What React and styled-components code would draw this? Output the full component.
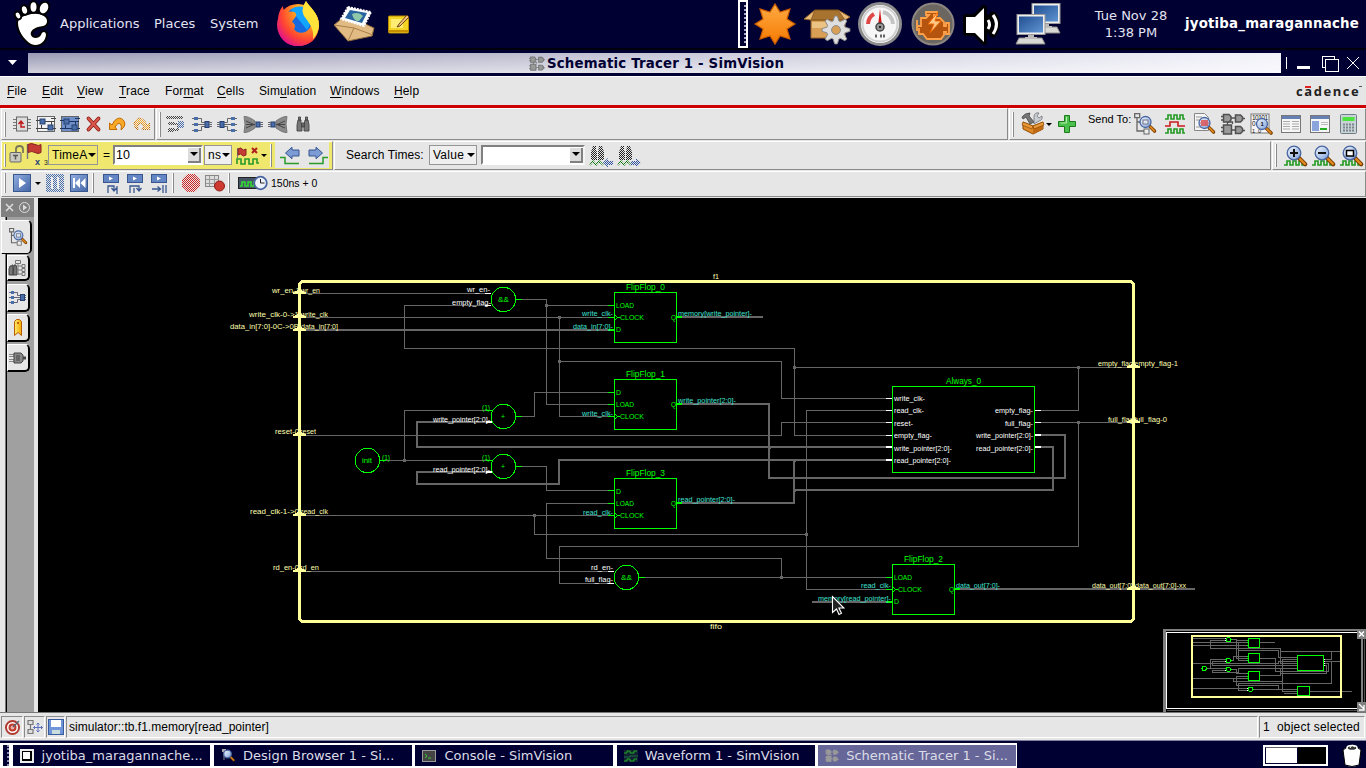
import React from "react";
import styled, { createGlobalStyle } from "styled-components";

const NAVY = "#000033";
const GREY = "#e6e6e6";
const BLUE = "#4a6ea9";
const UI = '"Liberation Sans", Arial, sans-serif';
const DESK = '"DejaVu Sans", sans-serif';

const Global = createGlobalStyle`
  * { box-sizing: border-box; }
  body { margin: 0; background: #000; overflow: hidden; }
`;

/* ---------- layout parts ---------- */
const Screen = styled.div`
  width: 1366px; height: 768px; display: flex; flex-direction: column;
  font-family: ${UI}; font-size: 12px; color: #000; overflow: hidden; cursor: default; white-space: nowrap;
`;
const Draw = styled.svg`
  display: block; flex: none; margin-left: ${(p) => p.$l || 0}px; margin-top: ${(p) => p.$t || 0}px; overflow: visible;
`;
const TopPanel = styled.header`
  height: 50px; flex: none; background: ${NAVY}; border-bottom: 2px solid #00000c; display: flex; align-items: center;
  font-family: ${DESK}; font-size: 13px; color: #e4e4f0;
`;
const PanelItem = styled.span`
  margin-left: ${(p) => p.$l || 0}px; width: ${(p) => p.$w}px; line-height: 16px; margin-top: -1px;
`;
const PanelGrip = styled.div`
  width: 10px; height: 48px; margin-left: 328px; border: 2px solid #fff; display: flex; justify-content: flex-end; padding: 3px 0;
  &::after { content: ""; border-right: 2px dotted #a8a8c8; }
`;
const Clock = styled.div`
  width: 80px; margin-left: 29px; text-align: center; line-height: 17px; margin-top: -1px;
`;
const User = styled.div`
  font-weight: bold; font-size: 13.33px; color: #fff; margin-left: 14px; width: 177px; margin-top: -1px; letter-spacing: .2px;
`;
const TitleBar = styled.div`
  height: 26px; flex: none; background: ${NAVY}; display: flex; align-items: center;
`;
const TitleFill = styled.div`
  width: 1253px; height: 20px; margin-left: 10px; display: flex; align-items: center;
  background: linear-gradient(180deg, rgba(255,255,255,0) 0%, rgba(255,255,255,.55) 100%), linear-gradient(90deg, #9999b4, #f2f2fa);
`;
const TitleText = styled.span`
  font: bold 13.33px ${DESK}; letter-spacing: .18px; color: ${NAVY}; margin-left: 2px; margin-top: 0;
`;
const MenuBar = styled.nav`
  height: 32px; flex: none; background: ${GREY}; border-top: 1px solid #fff; border-bottom: 3px solid #cc0000;
  display: flex; align-items: center; padding-left: 7px; padding-right: 6px;
`;
const MenuItem = styled.span`
  width: ${(p) => p.$w}px; letter-spacing: .12px; font-size: 12px;
  u { text-decoration: underline; text-underline-offset: 2px; }
`;
const Logo = styled.span`
  margin-left: auto; font: 700 13px "Open Sans", sans-serif; letter-spacing: 1.55px; color: #222; position: relative; width: 64px;
  i { position: absolute; left: 9px; top: 4px; width: 6px; height: 2px; background: #d22; }
  b { position: absolute; right: -2px; top: 4px; width: 3px; height: 1px; background: #555; }
`;
const ToolRow = styled.div`
  height: ${(p) => p.$h}px; flex: none; background: ${GREY}; display: flex; padding-left: 1px;
`;
const Group = styled.section`
  width: ${(p) => p.$w}px; background: ${(p) => p.$bg || GREY}; display: flex; align-items: center; flex: none;
  border: 1px solid; border-color: #fff #8a8a8a #8a8a8a #fff; margin-bottom: 1px; margin-right: 1px; padding: 0 0 ${(p) => p.$pb || 0}px 2px;
`;
const Grip = styled.i`
  width: 2px; height: ${(p) => p.$h || 25}px; margin-left: ${(p) => p.$l || 0}px; background: linear-gradient(90deg, #fff 50%, #8a8a8a 50%); flex: none;
`;
const Label = styled.span`
  margin-left: ${(p) => p.$l || 0}px; width: ${(p) => p.$w}px; letter-spacing: ${(p) => p.$s || 0}px; margin-top: ${(p) => p.$t || 0}px;
  font-size: ${(p) => p.$f || 12}px; flex: none;
`;
const Choice = styled.div`
  width: ${(p) => p.$w}px; height: 20px; margin-left: ${(p) => p.$l || 0}px; border: 1px solid #959595; background: ${(p) => p.$bg || "#efefef"};
  display: flex; align-items: center; justify-content: space-between; padding: 0 1px 0 3px; font-size: 12px; letter-spacing: .25px; flex: none;
`;
const Combo = styled.div`
  width: ${(p) => p.$w}px; height: 20px; margin-left: ${(p) => p.$l || 0}px; background: #fff; border: 2px solid; border-color: #808080 #f4f4f4 #fff #808080;
  display: flex; align-items: center; justify-content: space-between; padding-left: 1px; font-size: 12.5px; flex: none;
`;
const DropButton = styled.div`
  width: 13px; height: 15px; background: #dcdcdc; border-right: 2px solid #808080; border-bottom: 2px solid #808080; display: flex; align-items: center; justify-content: center;
`;
const Caret = styled.i`
  width: 0; height: 0; border: 4px solid transparent; border-top: 4px solid #000; border-bottom: 0; margin-left: ${(p) => p.$l || 0}px; flex: none;
  ${(p) => p.$small && "border-left-width:3px;border-right-width:3px;border-top-width:3px;"}
`;
const ArrowBox = styled.div`
  width: 54px; height: 26px; background: ${GREY}; margin-left: 3px; display: flex; align-items: center; flex: none;
`;
const BlueButton = styled.div`
  width: 18px; height: 18px; margin-left: ${(p) => p.$l || 0}px; flex: none; border: 1px solid #38578f; background: linear-gradient(135deg, #90ace0, #4568a8);
`;
const Main = styled.main`
  flex: 1; display: flex; position: relative; background: #000; min-height: 0;
`;
const Side = styled.aside`
  width: 38px; flex: none; background: #a0a0a0; border-right: 4px solid ${GREY}; border-left: 1px solid ${GREY}; display: flex; flex-direction: column;
`;
const SideHead = styled.div`
  height: 19px; background: #808080; display: flex; align-items: center; flex: none;
`;
const SideTabs = styled.div`
  flex: 1; display: flex; flex-direction: column; padding-top: 3px;
  background: linear-gradient(90deg, ${GREY} 4px, #777 4px, #777 5px, #000 5px, #000 6px, transparent 6px);
`;
const Tab = styled.div`
  width: ${(p) => (p.$on ? 31 : 23)}px; height: ${(p) => p.$h}px; margin-left: ${(p) => (p.$on ? 0 : 6)}px; margin-bottom: ${(p) => p.$b}px;
  background: ${GREY}; border: 1px solid; border-color: #fff #000 #000 #fff; border-width: 1px 2px ${(p) => (p.$on ? 1 : 2)}px 1px;
  border-radius: 0 5px 5px 0; display: flex; align-items: center; padding-left: ${(p) => (p.$on ? 7 : 1)}px; flex: none;
`;
const Canvas = styled.div` flex: 1; overflow: hidden; `;
const MiniMap = styled.div`
  position: absolute; right: 0; bottom: 0; width: 203px; height: 83px; background: #000; border-left: 3px solid #808080; border-top: 2px solid #808080;
`;
const StatusBar = styled.footer`
  height: 29px; flex: none; background: ${GREY}; border-top: 1px solid #777; border-bottom: 1px solid #8080a0; padding: 3px 1px 2px; display: flex;
`;
const StatusCell = styled.div`
  width: ${(p) => p.$w}px; ${(p) => p.$grow && "flex:1;"} border: 1px solid; border-color: #8a8a8a #fff #fff #8a8a8a; display: flex; align-items: center;
  padding-left: ${(p) => p.$p || 2}px; margin-right: ${(p) => (p.$last ? 0 : 1)}px; font-size: 12px; letter-spacing: ${(p) => p.$s || 0}px; white-space: pre;
`;
const TaskBar = styled.footer`
  height: 27px; flex: none; background: ${NAVY}; display: flex; align-items: center; font: 13px ${DESK}; color: #dcdce6;
`;
const TaskList = styled.div`
  background: #fff; height: 25px; margin-top: 2px; display: flex; gap: 3.6px; padding: 2px 1px 2px 3px; width: 1017px;
`;
const TaskGrip = styled.div`
  width: 6px; background: ${NAVY}; border-right: 2px dotted #8888a8; 
`;
const Task = styled.div`
  width: 198px; background: ${(p) => (p.$on ? "#666699" : NAVY)}; display: flex; align-items: center; padding-left: 7px; gap: ${(p) => p.$g || 9}px; overflow: hidden;
  span { margin-top: -1px; }
`;
const Pager = styled.div`
  width: 65px; height: 21px; margin-left: 246px; margin-top: 1px; border: 2px solid #fff; background: #000; display: flex;
  &::before { content: ""; width: 31px; background: #fff; border: 1px solid ${NAVY}; border-top-color: #666; }
`;

/* ---------- icons ---------- */
const DefsBox = styled.svg` position: absolute; `;
const Defs = () => (
  <DefsBox width="0" height="0">
    <defs>
      <pattern id="check" width="2" height="2" patternUnits="userSpaceOnUse">
        <rect width="1" height="1" fill="#fff" /><rect x="1" y="1" width="1" height="1" fill="#fff" />
      </pattern>
      <mask id="dither" maskUnits="userSpaceOnUse" x="-2" y="-2" width="40" height="40"><rect x="-2" y="-2" width="40" height="40" fill="url(#check)" /></mask>
      <linearGradient id="orange" x2="0" y2="1"><stop stopColor="#ffab44" /><stop offset="1" stopColor="#f57900" /></linearGradient>
      <linearGradient id="blueg" x2="1" y2="1"><stop stopColor="#234f92" /><stop offset="1" stopColor="#5f94d2" /></linearGradient>
      <radialGradient id="ffx" cx=".75" cy=".2" r=".9"><stop stopColor="#fff04a" /><stop offset=".4" stopColor="#ff9a1f" /><stop offset=".75" stopColor="#ff4433" /><stop offset="1" stopColor="#e31587" /></radialGradient>
      <linearGradient id="lens" x2="1" y2="1"><stop stopColor="#f4f8ff" /><stop offset="1" stopColor="#7fa2da" /></linearGradient>
      <linearGradient id="goldg" x2="1" y2="0"><stop stopColor="#ffea70" /><stop offset="1" stopColor="#f4a800" /></linearGradient>
    </defs>
  </DefsBox>
);
const Ico = ({ w, h, l, t, children }) => <Draw width={w} height={h} viewBox={`0 0 ${w} ${h}`} $l={l} $t={t}>{children}</Draw>;
const Lens = ({ x, y, r, fill = "url(#lens)" }) => (
  <g>
    <path d={`M${x + r * 0.7} ${y + r * 0.7} l${r * 0.95} ${r * 0.95}`} stroke="#7a3c00" strokeWidth={r * 0.62} strokeLinecap="round" />
    <path d={`M${x + r * 0.9} ${y + r * 0.9} l${r * 0.7} ${r * 0.7}`} stroke="#e08a1c" strokeWidth={r * 0.32} strokeLinecap="round" />
    <circle cx={x} cy={y} r={r} fill={fill} stroke="#4a66a0" strokeWidth="1.3" />
  </g>
);
const Foot = () => (
  <Ico w={36} h={46} l={14} t={0}>
    <g fill="#fff" stroke="#000" strokeWidth="4" paintOrder="stroke">
      <path d="M14 14C22 11 34 14 33 21C32 26 27 25 24 26C18 28 16 31 17 34C18 38 25 38 27 34C28 30 32 30 32 34C31 42 24 46 17 43C9 38 4 29 4 22C4 17 9 15 14 14Z" />
      <ellipse cx="30" cy="7" rx="4" ry="5.5" transform="rotate(25 30 7)" /><ellipse cx="19.5" cy="6" rx="3" ry="4.8" /><ellipse cx="10.5" cy="9" rx="2.5" ry="3.8" transform="rotate(-15 10.5 9)" /><ellipse cx="4" cy="14.5" rx="2" ry="3.1" transform="rotate(-25 4 14.5)" />
    </g>
  </Ico>
);
const Firefox = () => (
  <Ico w={44} h={46} l={18} t={-1}>
    <circle cx="22" cy="24" r="21" fill="url(#ffx)" />
    <circle cx="23" cy="20" r="14" fill="#1769e0" /><path d="M15 9C20 4 29 5 32 9C36 15 35 24 31 29L24 20Z" fill="#12a5ff" />
    <path d="M2 20C2 12 5 7 7 5C7 8 8 9 9 11C14 10 20 10 20 13C21 16 17 18 16 21C19 23 20 25 18 28C20 32 28 34 33 28C38 22 33 16 27 12C26 7 28 3 30 0C33 6 43 12 43 25C42 39 33 45 22 45C9 45 1 36 2 20Z" fill="url(#ffx)" />
    <path d="M30 0C34 7 43 12 43 25C42 31 40 35 37 38C38 29 35 24 28 15C25 9 28 4 30 0Z" fill="#ffe33a" />
  </Ico>
);
const Mail = () => (
  <Ico w={42} h={36} l={13}>
    <path d="M1 19L13 9L41 22L39 30L15 35Z" fill="#e2ba84" stroke="#8f6b3a" /><path d="M1 19L21 22L15 35M21 22L40 29" fill="none" stroke="#aa8048" />
    <path d="M15 1L38 6L31 20L8 13Z" fill="#fff" stroke="#fff" strokeWidth="2" strokeDasharray="2 1" /><path d="M17 4L34 7L29 17L12 12Z" fill="#28649f" /><path d="M19 8Q26 5 30 10L26 15Q21 16 19 8Z" fill="#8ec8a8" />
  </Ico>
);
const Note = () => (
  <Ico w={22} h={20} l={13} t={-1}>
    <rect x=".5" y="2" width="20" height="17" rx="1" fill="#f3d425" stroke="#b98a00" /><path d="M1 17h19" stroke="#c58f00" strokeWidth="2" /><path d="M3 5h12v9h-12z" fill="#ffed73" />
    <path d="M19 1L11 10L9 13L12 12L21 3Z" fill="#f6c07a" stroke="#5b3a10" strokeWidth=".9" />
  </Ico>
);
const Star = () => (
  <Ico w={42} h={42} l={6} t={-1}>
    <path d="M21 1L26 9L36 6L33 16L41 21L33 26L36 36L26 33L21 41L16 33L6 36L9 26L1 21L9 16L6 6L16 9Z" fill="url(#orange)" stroke="#c85a00" strokeWidth="1.2" />
  </Ico>
);
const gearPath = (cx, cy, r1, r2, n) => {
  let d = "";
  for (let i = 0; i < n * 4; i++) {
    const a = ((i - 0.5) / (n * 4)) * Math.PI * 2;
    const r = i % 4 < 2 ? r2 : r1;
    d += `${i ? "L" : "M"}${(cx + r * Math.cos(a)).toFixed(1)} ${(cy + r * Math.sin(a)).toFixed(1)}`;
  }
  return d + "Z";
};
const Package = () => (
  <Ico w={48} h={38} l={7} t={2}>
    <path d="M8 14H42V32H8Z" fill="#d9a055" stroke="#9a682a" /><path d="M12 4H35L42 14H8Z" fill="#a8732e" stroke="#7f5217" /><path d="M12 4L1 13L8 14Z" fill="#e9bb78" stroke="#9a682a" /><path d="M35 4L47 11L42 14Z" fill="#e9bb78" stroke="#9a682a" /><path d="M9 16h22v6h-22z" fill="#eac384" />
    <path d={gearPath(33, 24, 9.5, 14, 8)} fill="#dedede" stroke="#8a8a8a" /><circle cx="33" cy="24" r="4.4" fill="#d9a055" stroke="#8a8a8a" />
  </Ico>
);
const Gauge = () => (
  <Ico w={44} h={44} l={7} t={0}>
    <circle cx="22" cy="22" r="20.5" fill="#fbfbfb" stroke="#8c8c8c" strokeWidth="3" /><circle cx="22" cy="22" r="17.5" fill="#f6f6f6" stroke="#cfcfcf" strokeWidth="2" />
    <path d="M10 22A12 12 0 0 1 16 12" fill="none" stroke="#e04848" strokeWidth="4" /><path d="M25 10A13 13 0 0 1 35 22" fill="none" stroke="#c4c4c4" strokeWidth="4" />
    <path d="M20 24L22 7L24 24Z" fill="#d01818" /><circle cx="22" cy="25" r="4" fill="#999" stroke="#444" strokeWidth="1.5" /><circle cx="22" cy="25" r="1.2" fill="#222" /><path d="M17 34h3M22 34h6" stroke="#666" strokeWidth="3" strokeDasharray="2 1" />
  </Ico>
);
const Engine = () => (
  <Ico w={44} h={44} l={9} t={0}>
    <circle cx="22" cy="22" r="20.5" fill="#6c6660" stroke="#8c8580" strokeWidth="2" />
    <path d="M6 18v11M6 24h4v-8h5l3-3h-3v-3h11v3h-3v3h6l4 4v4h2v-3h3v11h-3v-2h-2v3l-3 4h-14l-4-5h-4v-6" fill="#b4540f" stroke="#ffa24a" strokeWidth="1.8" /><path d="M27 10L17 22h6l-4 9L30 19h-6Z" fill="#ffc98a" stroke="#f26a00" />
  </Ico>
);
const Speaker = () => (
  <Ico w={40} h={44} l={7} t={0}>
    <path d="M4 15H13L22 6V40L13 31H4Z" fill="#fff" stroke="#000" strokeWidth="6" strokeLinejoin="round" paintOrder="stroke" /><path d="M27 16Q31 22 27 28M31 13Q38 22 31 32" fill="none" stroke="#000" strokeWidth="7" strokeLinecap="round" /><path d="M26 18Q29 22.5 26 27M31 13Q38 22 31 32" fill="none" stroke="#fff" strokeWidth="3" />
  </Ico>
);
const Computers = () => (
  <Ico w={46} h={42} l={14} t={-1}>
    {[[15, 0], [0, 11]].map(([x, y]) => (
      <g key={x} transform={`translate(${x} ${y})`}>
        <path d="M3 24H26L29 30H0Z" fill="#d8d8d4" stroke="#8b8b88" /><path d="M12 20h6v3h3v2h-12v-2h3z" fill="#bbb" /><rect x="1" y=".5" width="28" height="20" fill="#eee" stroke="#999" /><rect x="3" y="2.5" width="24" height="16" fill="url(#blueg)" />
      </g>
    ))}
  </Ico>
);
const Gates = ({ w = 24, h = 22, l, t, c = "#505050" }) => (
  <Draw width={w} height={h} viewBox="0 0 24 22" preserveAspectRatio="none" $l={l} $t={t}>
    <path d="M0 3.5h3M0 7h3M9 5h6M21 5.5h3M0 14.5h3M0 18.5h3M11.5 11v-2h-5v3M10 17h5M21 17.5h3" fill="none" stroke={c} strokeWidth="1.3" />
    <path d="M2.5 1.5h5.5l2 2v3.5l-2 2h-5.5zM14.5 2h5l2 2v3l-2 2h-5zM2.5 12h8v9h-8zM14.5 13.5h5l2 2v3l-2 2h-5z" fill="#999" stroke={c} strokeWidth="1.5" />
  </Draw>
);
const Chip = () => (
  <Ico w={18} h={16} l={7}>
    <path d="M0 3.5h18M0 6.5h18M0 9.5h18M0 12.5h18" stroke="#777" /><rect x="3.5" y="1" width="11" height="14" fill="#dcdcdc" stroke="#666" /><path d="M12 11H8V6M5.5 8L8 5.2L10.5 8" fill="none" stroke="#c21a1a" strokeWidth="1.5" />
  </Ico>
);
const Nets = ({ l, fill }) => (
  <Ico w={20} h={18} l={l}>
    <rect x="1.5" y="1.5" width="17" height="15" fill={fill || "#f2f2f2"} stroke="#666" /><path d="M0 5.5h4M0 13.5h12M9 6.5h10M15.5 6v4M5.5 10v3.5M15 3.5h5M17 13.5h3" stroke={fill ? "#1d3362" : "#444"} fill="none" />
    <rect x="4" y="4" width="5" height="5" fill={BLUE} stroke="#27406f" /><rect x="12" y="10" width="5" height="5" fill={BLUE} stroke="#27406f" />
  </Ico>
);
const Cross = () => (<Ico w={15} h={16} l={6}><path d="M2.5 2.5L12.5 13.5M12.5 2.5L2.5 13.5" stroke="#8f1d15" strokeWidth="3.8" strokeLinecap="round" /><path d="M2.5 2.5L12.5 13.5M12.5 2.5L2.5 13.5" stroke="#d8564a" strokeWidth="2.2" strokeLinecap="round" /></Ico>);
const Undo = ({ l, flip, fade }) => (
  <Ico w={17} h={14} l={l}><g mask={fade ? "url(#dither)" : undefined}><path transform={flip ? "translate(17 0) scale(-1 1)" : undefined} d="M.5 6L.5 12.5H8L6 10Q9 5 11.5 7Q13 9 12 13Q17 9 15.5 5Q13 0 8.5 1.5Q5 3 3 8Z" fill="#f9a928" stroke="#c06a00" /></g></Ico>
);
const Fan = ({ l, flip, dark }) => (
  <Ico w={20} h={17} l={l}>
    <g transform={flip ? "translate(20 0) scale(-1 1)" : undefined}>
      {dark ? (<>
        <path d="M1 .5Q5 0 12 5V12Q5 17 1 16.5Q3 8 1 .5Z" fill="#8a8a8a" stroke="#777" /><path d="M3 5l8 3.5M3 12l8-3.5M3 8.5h9" stroke="#444" /><rect x="13" y="6" width="4" height="5" fill={BLUE} stroke="#27406f" />
      </>) : (<>
        <path d="M0 2.5h9.5v4h4M0 8.5h13M0 14.5h9.5v-4h4" fill="none" stroke="#666" /><path d="M2 1h4v3h-4zM2 7h4v3h-4zM2 13h4v3h-4z" fill={BLUE} /><rect x="13" y="5.5" width="4" height="6" fill={BLUE} stroke="#27406f" />
      </>)}
      <path d="M17 6.5h3M17 8.5h3M17 10.5h3" stroke="#667" />
    </g>
  </Ico>
);
const DitherNet = () => (<Ico w={20} h={18} l={5}><g mask="url(#dither)"><path d="M0 1h17v3h-17zM2 7h6v3h-6zM2 13h6v4h-6zM8 8h5v2h-5zM8 14h3v-4h2v6h-5z" fill="#444" /><rect x="12" y="6" width="6" height="7" fill={BLUE} /></g></Ico>);
const Binoculars = ({ l, t }) => (<Ico w={14} h={16} l={l} t={t}><path d="M2 4h3v3l1 2v6h-5v-6zM9 4h3l1 5v6h-5v-6zM5.5 7h3v4h-3zM2.5 1h2v3h-2zM9.5 1h2v3h-2z" fill="#777" stroke="#444" strokeWidth=".9" /></Ico>);
const Toolbox = () => (
  <Ico w={24} h={22} l={7} t={-2}>
    <path d="M1 5q3-4 8-4l-1 3 5 6-4 2-4-7-3 2z" fill="#777" stroke="#555" /><path d="M13 4q1-4 5-3l-2 3 2 2 3-2q1 4-3 5l-5 3z" fill="#c8cdd4" stroke="#666" strokeWidth=".7" /><path d="M2 10L12 14L22 10V17L12 22L2 17Z" fill="#e08a28" stroke="#8f4a00" /><path d="M12 14v8l10-5v-7z" fill="#c06a14" /><path d="M2 10l-1 3 10 4 1-3zM22 10l1 3-10 4-1-3z" fill="#e99a3c" stroke="#8f4a00" strokeWidth=".7" />
  </Ico>
);
const Plus = () => (<Ico w={18} h={18} l={6} t={0}><path d="M6.5 .5h5v6h6v5h-6v6h-5v-6h-6v-5h6z" fill="#4cc04c" stroke="#1c7a1c" /><path d="M8.5 2v6h-6" stroke="#b5efb0" fill="none" /></Ico>);
const TreeLens = ({ l, w = 22, h = 22 }) => (
  <Draw width={w} height={h} viewBox="0 0 22 22" $l={l}><path d="M3 4v14h7M3 9h5M.7.7h5v4h-5z" fill="none" stroke="#666" strokeWidth="1.3" /><rect x="10" y="16" width="5" height="5" fill="#eee" stroke="#666" /><Lens x={11.5} y={9} r={5.5} /><rect x="9" y="7" width="5" height="4" fill="#dfe6f4" stroke="#778" /></Draw>
);
const Wave = ({ d, y = 0, c = "#229a22" }) => <path transform={`translate(0 ${y})`} d={d || "M0 5h3v-4h3v4h3v-4h3v4h3v-4h3v4h2"} fill="none" stroke={c} strokeWidth="1.6" />;
const Waves = () => (<Ico w={20} h={20} l={9} t={-1}><Wave /><Wave y={7} c="#cc1c1c" d="M0 5h5v-4h8v4h7" /><Wave y={14} /></Ico>);
const PageLens = () => (<Ico w={22} h={22} l={8} t={-1}><path d="M1.5 .5h10l4 4v13h-14z" fill="#f5f5f5" stroke="#888" /><path d="M3 4h6M3 7h10M3 14h8" stroke="#999" /><Lens x={11.5} y={10} r={5.5} /><path d="M8 8h7M7.5 10h8M8 12h7" stroke="#d44" strokeWidth="1.4" /></Ico>);
const BitsLens = () => (
  <Ico w={23} h={22} l={5} t={-1}>
    <rect x="1" y="1" width="18" height="19" fill="#f6f6f6" stroke="#777" />
    <g fontFamily="Liberation Sans, sans-serif" fontSize="6.5" fill="#111"><text x="2" y="6.6" textLength="16">10101</text><text x="2" y="13">0</text><text x="2" y="19.6" fontSize="5.5" textLength="9">10</text></g>
    <Lens x={12} y={11} r={5.5} /><text x="10.4" y="13.4" fontSize="6" fontWeight="bold" fontFamily="Liberation Sans, sans-serif" fill="#111">1</text>
  </Ico>
);
const Win = ({ l, two }) => (
  <Ico w={20} h={18} l={l}><rect x=".5" y=".5" width="19" height="17" fill="#f6f6f6" stroke="#777" /><rect x="1" y="1" width="18" height="3" fill="#6680b4" />
    {two ? <><rect x="2" y="6" width="7" height="10" fill="#8ba5dc" /><path d="M11 7.5h7M11 9.5h7" stroke="#bbb" /><path d="M10 14h7" stroke="#22b022" strokeWidth="2" /></> : <path d="M2 6.5h7M11 6.5h7M2 9h7M11 9h7M2 11.5h7M11 11.5h7M2 14h7M11 14h7" stroke="#aaa" strokeWidth="1.2" />}
  </Ico>
);
const Calc = () => (<Ico w={17} h={20} l={10}><rect x=".5" y=".5" width="16" height="19" rx="1" fill="#c9d2d6" stroke="#6f7d84" /><rect x="2.5" y="3" width="12" height="4" fill="#4de33f" /><path d="M3 10.5h12M3 13.5h12M3 16.5h12" stroke="#7b878c" strokeWidth="2" strokeDasharray="2 1" /></Ico>);
const LockFlag = () => (
  <Ico w={40} h={24} l={2}>
    <path d="M8 10v-4q0-3 3.5-3t3.5 3v4" fill="none" stroke="#77775a" strokeWidth="1.8" /><rect x="2" y="9.5" width="11" height="9.5" rx="1" fill="#c9c9c0" stroke="#666" /><path d="M5 12.5h5M7.5 12.5v4" stroke="#555" strokeWidth="1.5" />
    <path d="M19.5 1v15" stroke="#777" strokeWidth="1.4" /><path d="M20 1.5q3-2 7 0t6 0v8q-3 2-6 0t-7 0z" fill="#c53c34" stroke="#822" /><text x="27" y="21.5" fontSize="9" fontWeight="bold" fill="#1c3d7c">x</text><text x="36" y="21.5" fontSize="7" fill="#222">3</text>
  </Ico>
);
const FlagWave = () => (<Ico w={24} h={18} l={4} t={2}><path d="M1.5 1v10" stroke="#777" /><path d="M2 2q3-2 4 0t4 0v6q-3 2-4 0t-4 0z" fill="#c53c34" stroke="#822" /><path d="M16 1l5 5M21 1l-5 5" stroke="#b02020" strokeWidth="2" /><Wave y={11} d="M1 6v-5h4v5h4v-5h4v5h4v-5h4v4h2" c="#2a9a2a" /></Ico>);
const Step = ({ l, flip }) => (
  <Ico w={21} h={19} l={l} t={1}><g transform={flip ? "translate(21 0) scale(-1 1)" : undefined}><path d="M5.5 7L12 1.2V4H19V10H12V12.8Z" fill="#7d9bd4" stroke="#35548f" /><path d="M0 11.5h5v6h14" fill="none" stroke="#2a9a2a" strokeWidth="1.5" /></g></Ico>
);
const FindWave = ({ l, flip }) => (
  <Ico w={23} h={22} l={l} t={1}><g mask="url(#dither)"><path d="M3 1h3v4l1 2v8h-6v-8zM9 1h3l2 6v8h-6v-8z" fill="#222" /><Wave y={15} d="M0 5l3-4 3 4 3-4 4 4" c="#0a7a0a" /><path transform={flip ? "translate(36 0) scale(-1 1)" : undefined} d="M13 17.5l5-4.5v3h5v4h-5v2.5z" fill="#2c50a0" /></g></Ico>
);
const ZoomWave = ({ l, kind }) => (
  <Ico w={23} h={22} l={l} t={1}><Wave y={14} d="M0 6h3v-4h3v4h3v-4h3v4h3v-4h3v4h2" /><Lens x={10} y={8} r={6.8} />
    {kind === "box" ? <rect x="6.5" y="5.5" width="7" height="5.5" fill="#fff" stroke="#000" strokeWidth="1.5" /> : <path d={kind === "plus" ? "M6 8h8M10 4v8" : "M6 8h8"} stroke="#111" strokeWidth="2" />}
  </Ico>
);
const Screenlet = ({ l, d }) => (<Ico w={17} h={20} l={l} t={1}><rect x=".5" y=".5" width="15" height="8" fill="#6486c4" stroke="#38578f" /><path d="M6 2.5l4 2-4 2z" fill="#fff" /><path d={d} fill="none" stroke="#38578f" strokeWidth="1.3" /></Ico>);

/* ---------- schematic ---------- */
const THIN = [
  "M305 293.5H485", "M485 305.5H404.5V348.5H794.5V435.5H886", "M794.5 367.5H1128", "M1078.5 367.5V410.5H1040",
  "M305 317.5H608", "M559.5 317.5V416.5H608", "M559.5 361.5H781.5V398.5H886", "M522 299.5H546.5V404.5H608", "M546.5 305.5H608",
  "M491 410.5H404.5V460.5", "M386 460.5H486", "M522 416.5H534.5V392.5H608", "M305 435.5H781.5V422.5H886", "M522 466.5H546.5V490.5H608",
  "M305 515.5H608", "M534.5 515.5V534.5H806.5", "M886 410.5H806.5V589.5H886", "M305 571.5H608", "M608 503.5H546.5V558.5H781.5V577.5",
  "M645 577.5H886", "M608 583.5H559.5V546.5H1078.5V422.5", "M1040 422.5H1128",
];
const THICK = [
  "M305 330H608", "M682 317H763", "M486 422H417V447H886", "M682 404H769V478H1065V435H1040", "M486 472H417V484H559V460H886",
  "M682 503H794V460", "M794 490H1053V447H1040", "M812 602H886", "M960 589H1195",
];
const JOINTS = [[546, 305], [559, 317], [559, 361], [794, 367], [1078, 367], [1078, 422], [404, 460], [534, 515], [806, 534], [781, 577], [769, 447], [794, 460], [794, 490]];
const BOXES = [[614.5, 292.5, 62, 50], [614.5, 379.5, 62, 50], [614.5, 478.5, 62, 50], [892.5, 564.5, 62, 50], [892.5, 386.5, 142, 86]];
const CIRCLES = [[503.5, 299.5], [503.5, 416.5], [503.5, 466.5], [626.5, 577.5], [367.5, 460.5]];
const GPINS = ["M516 299.5h6", "M516 416.5h6", "M516 466.5h6", "M639 577.5h6", "M380 460.5h6", "M486 410.5h6", "M486 460.5h6", "M608 305.5h6", "M608 317.5h6", "M608 392.5h6", "M608 404.5h6", "M608 416.5h6", "M608 490.5h6", "M608 503.5h6", "M608 515.5h6", "M886 577.5h6", "M886 589.5h6"];
const GPINS2 = ["M608 330h6", "M677 317h5", "M677 404h5", "M677 503h5", "M955 589h5", "M886 602h6"];
const WPINS = ["M485 293.5h6", "M485 305.5h6", "M608 571.5h6", "M608 583.5h6", "M886 398.5h6", "M886 410.5h6", "M886 422.5h6", "M886 435.5h6", "M1035 410.5h6", "M1035 422.5h6"];
const WPINS2 = ["M486 422h6", "M486 472h6", "M886 447h6", "M886 460h6", "M1035 435h6", "M1035 447h6"];
const PORTS = [[299, 293], [299, 317], [299, 330], [299, 435], [299, 515], [299, 571], [1133, 367], [1133, 422], [1133, 589]];

const Circuit = ({ mini }) => {
  const ve = mini ? "non-scaling-stroke" : undefined;
  const run = (list, c, w) => list.map((d) => <path key={d} d={d} stroke={c} strokeWidth={mini ? 1 : w} vectorEffect={ve} />);
  return (
    <g fill="none" shapeRendering="crispEdges">
      {run(THIN, "#666", 1)}{run(THICK, "#666", 2)}
      {run(GPINS, "#0f0", 1)}{run(GPINS2, "#0f0", 2)}{run(WPINS, "#fff", 1)}{run(WPINS2, "#fff", 2)}
      <rect x="299.5" y="281.5" width="834" height="340" rx={mini ? 0 : 4} stroke="#ffff99" strokeWidth={mini ? 2 : 3} vectorEffect={ve} />
      {BOXES.map(([x, y, w, h]) => <rect key={x + "," + y} x={x} y={y} width={w} height={h} stroke="#0f0" strokeWidth="1" vectorEffect={ve} />)}
      {CIRCLES.map(([x, y]) => <circle key={x + "," + y} cx={x} cy={y} r="12.2" stroke="#0f0" strokeWidth="1" vectorEffect={ve} />)}
      {!mini && JOINTS.map(([x, y]) => <rect key={x + "," + y} x={x - 1} y={y - 1} width="3" height="3" fill="#666" />)}
      {!mini && PORTS.map(([x, y]) => <path key={x + "," + y} d={`M${x - 6} ${y + 1}v-2h2v-1h2v-1h5v1h2v1h2v2z`} fill="#ffff99" />)}
      {!mini && [317.5, 416.5, 515.5].map((y) => <path key={y} d={`M615 ${y - 2}l3 2l-3 2M618 ${y}h2`} stroke="#0f0" />)}
      {!mini && <path d="M893 587.5l3 2l-3 2M896 589.5h2" stroke="#0f0" />}
    </g>
  );
};
const Y = "#ffffb0", C = "#40e0d0", G = "#00ff00", W = "#fff";
/* text, x, baseline, width, colour, size */
const LABELS = [
  ["f1", 713, 279, 6, Y, 8], ["fifo", 710, 629, 12, Y, 8],
  ["wr_en-1", 272, 293, 28, Y], ["wr_en", 301, 293, 19, Y], ["write_clk-0->1", 249, 317, 50, Y], ["write_clk", 301, 317, 27, Y],
  ["data_in[7:0]-0C->0B", 230, 329, 69, Y], ["data_in[7:0]", 301, 329, 37, Y], ["reset-0", 275, 434, 24, Y], ["reset", 300, 434, 16, Y],
  ["read_clk-1->0", 250, 514, 49, Y], ["read_clk", 301, 514, 27, Y], ["rd_en-0", 273, 570, 26, Y], ["rd_en", 300, 570, 19, Y],
  ["empty_flag", 1098, 366, 35, Y], ["empty_flag-1", 1134, 366, 44, Y], ["full_flag", 1108, 422, 26, Y], ["full_flag-0", 1134, 422, 33, Y],
  ["data_out[7:0]", 1092, 588, 41, Y], ["data_out[7:0]-xx", 1135, 588, 51, Y],
  ["wr_en-", 467, 292, 23, W], ["empty_flag-", 452, 304.5, 39, W], ["write_pointer[2:0]-", 433, 421.5, 57, W], ["read_pointer[2:0]-", 433, 471.5, 57, W],
  ["rd_en-", 591, 570, 22, W], ["full_flag-", 585, 582, 28, W],
  ["write_clk-", 582, 316, 31, C], ["data_in[7:0]-", 573, 329, 40, C], ["write_clk-", 582, 416, 31, C], ["read_clk-", 583, 515, 30, C],
  ["memory[write_pointer]-", 678, 316, 74, C], ["write_pointer[2:0]-", 678, 403, 58, C], ["read_pointer[2:0]-", 678, 502, 57, C],
  ["read_clk-", 861, 588, 30, C], ["memory[read_pointer]-", 818, 601, 73, C], ["data_out[7:0]-", 956, 588, 44, C],
  ["write_clk-", 894, 401, 31, W], ["read_clk-", 894, 413, 30, W], ["reset-", 894, 426, 19, W], ["empty_flag-", 894, 438, 38, W], ["write_pointer[2:0]-", 894, 451, 58, W], ["read_pointer[2:0]-", 894, 463, 57, W],
  ["empty_flag-", 995, 413, 38, W], ["full_flag-", 1005, 426, 28, W], ["write_pointer[2:0]-", 976, 438, 57, W], ["read_pointer[2:0]-", 976, 451, 57, W],
  ["FlipFlop_0", 626, 290, 39, G, 9], ["FlipFlop_1", 626, 377, 39, G, 9], ["FlipFlop_3", 626, 476, 39, G, 9], ["FlipFlop_2", 904, 562, 39, G, 9], ["Always_0", 946, 384, 35, G, 9],
  ["LOAD", 616, 308, 18, G], ["CLOCK", 620, 320, 24, G], ["D", 616, 332, 5, G], ["Q", 671, 320, 5, G],
  ["D", 616, 395, 5, G], ["LOAD", 616, 407, 18, G], ["CLOCK", 620, 419, 24, G], ["Q", 671, 407, 5, G],
  ["D", 616, 494, 5, G], ["LOAD", 616, 506, 18, G], ["CLOCK", 620, 518, 24, G], ["Q", 671, 506, 5, G],
  ["LOAD", 894, 580, 18, G], ["CLOCK", 898, 592, 24, G], ["D", 894, 604, 5, G], ["Q", 949, 592, 5, G],
  ["&&", 498, 302, 11, G], ["&&", 621, 580, 11, G], ["+", 501, 419, 4, G], ["+", 501, 469, 4, G], ["init", 362, 463, 10, G, 8],
  ["(1)", 482, 409.5, 8, G, 8], ["(1)", 482, 460, 8, G, 8], ["(1)", 382, 460, 8, G, 8],
];
const Schematic = () => (
  <Draw width="1328" height="514" viewBox="38 198 1328 514">
    <Circuit />
    <g fontFamily="Liberation Sans, Arial, sans-serif">
      {LABELS.map(([s, x, y, w, c, size], i) => <text key={i} x={x} y={y} textLength={w} lengthAdjust="spacingAndGlyphs" fill={c} fontSize={size || 7.5}>{s}</text>)}
    </g>
    <path d="M832.5 596.5v16l4-3.5 2.5 5.5 2.5-1.2-2.6-5.3h5z" fill="#222" stroke="#fff" strokeWidth="1.1" />
  </Draw>
);
const Overview = () => (
  <MiniMap>
    <Draw width="200" height="81" viewBox="1166 631 200 81">
      <rect x="1166.5" y="632.5" width="195.5" height="76" fill="none" stroke="#fff" />
      <path d="M1167.5 710.5H1364.5V633" fill="none" stroke="#999" strokeDasharray="1 1" />
      <g transform="translate(1192 636.4) scale(.1787) translate(-299.5 -281.5)"><Circuit mini /></g>
      <rect x="1357" y="629" width="9" height="10" fill="#808080" /><path d="M1359 631.5l5 5M1364 631.5l-5 5" stroke="#fff" strokeWidth="1.5" />
      <rect x="1357" y="702" width="9" height="10" fill="#808080" /><path d="M1359 704l5 5M1364 705v5h-5" stroke="#fff" strokeWidth="1.3" fill="none" />
    </Draw>
  </MiniMap>
);

const MENU = [["F", "ile", 35], ["E", "dit", 35], ["V", "iew", 42], ["T", "race", 46], ["For|m", "at", 52], ["C", "ells", 42], ["Sim|u", "lation", 71], ["W", "indows", 64], ["H", "elp", 30]];

export default function App() {
  return (
    <Screen>
      <Global /><Defs />
      <TopPanel>
        <Foot />
        <PanelItem $l={10} $w={94}>Applications</PanelItem><PanelItem $w={56}>Places</PanelItem><PanelItem $w={48}>System</PanelItem>
        <Firefox /><Mail /><Note />
        <PanelGrip />
        <Star /><Package /><Gauge /><Engine /><Speaker /><Computers />
        <Clock>Tue Nov 28<br />1:38 PM</Clock>
        <User>jyotiba_maragannache</User>
      </TopPanel>

      <TitleBar>
        <Ico w={10} h={6} l={8}><path d="M0 0h9l-4.5 5z" fill="#fff" /></Ico>
        <TitleFill>
          <Gates w={16} h={15} l={501} c="#777" />
          <TitleText>Schematic Tracer 1 - SimVision</TitleText>
        </TitleFill>
        <Ico w={80} h={18} l={4} t={0}>
          <g fill="none" stroke="#fff"><path d="M1.5 3v12" /><path d="M12 13.5h13" strokeWidth="3" /><rect x="37.5" y="2.5" width="12" height="11" /><rect x="40.5" y="5.5" width="13" height="12" fill={NAVY} /><path d="M62 3l12 12M74 3L62 15" /></g>
        </Ico>
      </TitleBar>

      <MenuBar>
        {MENU.map(([a, b, w]) => {
          const [pre, key] = a.includes("|") ? a.split("|") : ["", a];
          return <MenuItem key={b} $w={w}>{pre}<u>{key}</u>{b}</MenuItem>;
        })}
        <Logo>cadence<i /><b /></Logo>
      </MenuBar>

      <ToolRow $h={33}>
        <Group $w={154}>
          <Grip />
          <Chip /><Nets l={5} /><Nets l={4} fill="#6f8fcb" /><Cross /><Undo l={8} /><Undo l={7} flip fade />
        </Group>
        <Group $w={852}>
          <Grip />
          <DitherNet /><Fan l={6} /><Fan l={5} flip /><Fan l={6} dark /><Fan l={5} flip dark /><Binoculars l={8} />
        </Group>
        <Group $w={357}>
          <Grip />
          <Toolbox /><Caret $small $l={1} /><Plus />
          <Label $l={12} $w={44} $t={-10} $f={11}>Send To:</Label>
          <TreeLens l={2} /><Waves /><PageLens /><Gates w={24} h={22} l={6} t={-1} /><BitsLens /><Win l={8} /><Win l={9} two /><Calc />
        </Group>
      </ToolRow>

      <ToolRow $h={30}>
        <Group $w={332} $bg="#f0e86e" $pb={1}>
          <Grip $h={23} />
          <LockFlag />
          <Choice $w={50} $bg="#f0e86e">TimeA<Caret /></Choice>
          <Label $l={5} $w={10}>=</Label>
          <Combo $w={90}>10<DropButton><Caret /></DropButton></Combo>
          <Choice $w={28} $l={1}>ns<Caret /></Choice>
          <FlagWave /><Caret $small $l={1} /><Grip $l={3} $h={23} />
          <ArrowBox><Step l={5} /><Step l={6} flip /></ArrowBox>
        </Group>
        <Group $w={937} $pb={1}>
          <Label $l={9} $w={83} $s={0.08}>Search Times:</Label>
          <Choice $w={48}>Value<Caret /></Choice>
          <Combo $w={104} $l={4}><span /><DropButton><Caret /></DropButton></Combo>
          <FindWave l={5} /><FindWave l={5} flip />
        </Group>
        <Group $w={94} $pb={1}>
          <Grip $h={23} />
          <ZoomWave l={7} kind="plus" /><ZoomWave l={5} kind="minus" /><ZoomWave l={5} kind="box" />
        </Group>
      </ToolRow>

      <ToolRow $h={27}>
        <Group $w={1365} $pb={2}>
          <Grip $h={20} />
          <BlueButton $l={7}><Ico w={16} h={16}><path d="M5 3l7 5-7 5z" fill="#fff" /></Ico></BlueButton>
          <Caret $small $l={4} />
          <Ico w={18} h={18} l={5}><g mask="url(#dither)"><rect width="18" height="18" fill={BLUE} /></g><path d="M6 3v12M12 3v12" stroke="#eee" strokeWidth="2" /></Ico>
          <BlueButton $l={6}><Ico w={16} h={16}><path d="M2 3h2v10h-2zM9 3v10l-5-5zM14.5 3v10l-5-5z" fill="#fff" /></Ico></BlueButton>
          <Grip $l={4} $h={20} />
          <Screenlet l={9} d="M5 19v-7h6v4M8.5 14l2.5 3 2.5-3M14 12v8" /><Screenlet l={7} d="M3 19v-7h9v4M7 19v-5M9.5 14l2.5 3 2.5-3" /><Screenlet l={7} d="M1 15h8M6.5 12.5l3 2.5-3 2.5M12 11v8M15 11v8" />
          <Grip $l={4} $h={20} />
          <Ico w={18} h={18} l={8}><g mask="url(#dither)"><path d="M5.5 0h7l5.5 5.5v7l-5.5 5.5h-7l-5.5-5.5v-7z" fill="#cc2222" /></g></Ico>
          <Ico w={21} h={18} l={5}><rect x=".5" y="1.5" width="13" height="11" fill="#ddd" stroke="#888" /><path d="M4.5 2v10M9.5 2v10M1 5.5h13M1 9.5h13" stroke="#999" /><circle cx="14.5" cy="12" r="5" fill="#cc3a30" stroke="#8c1d15" /></Ico>
          <Grip $l={2} $h={20} />
          <Ico w={30} h={16} l={8} t={-1}><rect x=".5" y="2.5" width="18" height="11" fill="#456" stroke="#222" /><Wave y={5} d="M2 6h2v-4h3v4h3v-4h3v4h3v-4h2" c="#33dd33" /><circle cx="22.5" cy="8" r="6.3" fill="#eef2fb" stroke="#4a66a0" strokeWidth="1.8" /><path d="M22.5 4v4h4" stroke="#222" fill="none" /></Ico>
          <Label $l={3} $w={60} $f={10.5}>150ns + 0</Label>
        </Group>
      </ToolRow>

      <Main>
        <Side>
          <SideHead><Ico w={34} h={19}><path d="M5 6l7 7M12 6l-7 7" stroke="#ddd" strokeWidth="1.5" /><circle cx="23.5" cy="9.5" r="5" fill="none" stroke="#ddd" /><path d="M22 6.5l4 3-4 3z" fill="#ddd" /></Ico></SideHead>
          <SideTabs>
            <Tab $on $h={34} $b={1}><TreeLens w={18} h={18} l={0} /></Tab>
            <Tab $h={26} $b={3}><Ico w={17} h={16}><path d="M1 6h2v-1h1v10h-4v-6zM5 5h2l1 4v6h-4z" fill="#777" stroke="#444" /><path d="M6.5 .5h5v3h-5zM9 4v11M9 6h4M9 10h4M9 14h4M13 4.5h3v3h-3zM13 8.5h3v3h-3zM13 12.5h3v3h-3z" fill="none" stroke="#777" /></Ico></Tab>
            <Tab $h={28} $b={2}><Ico w={17} h={15}><path d="M0 2.5h8.5v3h3M0 7.5h11M0 12.5h8.5v-3h3M15 5.5h2M15 7.5h2M15 9.5h2" fill="none" stroke="#667" /><path d="M2 1h3v3h-3zM2 6h3v3h-3zM2 11h3v3h-3z" fill={BLUE} /><rect x="11.5" y="4.5" width="4" height="6" fill={BLUE} stroke="#27406f" /></Ico></Tab>
            <Tab $h={28} $b={2}><Ico w={8} h={17} l={5}><path d="M.5 2.5l2-2h3l2 2v14l-3.5-3-3.5 3z" fill="url(#goldg)" stroke="#b85c00" /><circle cx="4" cy="4" r="1" fill="#a40" /></Ico></Tab>
            <Tab $h={28} $b={3}><Ico w={17} h={12}><path d="M0 2.5h5v2h-5M0 7.5h5v2h-5" fill="none" stroke="#888" /><path d="M5 1h7l2 2v6l-2 2h-7z" fill="#888" stroke="#444" /><path d="M7 3h4v6h-4z" fill="#666" /><path d="M14 6h3" stroke="#444" strokeWidth="3" /></Ico></Tab>
          </SideTabs>
        </Side>
        <Canvas><Schematic /></Canvas>
        <Overview />
      </Main>

      <StatusBar>
        <StatusCell $w={22} $p={3}><Ico w={16} h={16}><circle cx="7.5" cy="8.5" r="6.5" fill="#fff" stroke="#b03a30" strokeWidth="2" /><circle cx="7.5" cy="8.5" r="3" fill="#e8b0a8" stroke="#c0392b" strokeWidth="2" /><path d="M8 8l6-6" stroke="#567" strokeWidth="1.5" /></Ico></StatusCell>
        <StatusCell $w={21} $p={2}><Ico w={16} h={16}><path d="M1 1.5h5v4h-5zM1 10.5h5v4h-5zM3.5 5.5v5" fill="#ddd" stroke="#777" strokeWidth="1.2" /><path d="M11 4v9M6.5 8.5h9M9.500 5.500l1.500-1.500 1.500 1.500M9.500 11.500l1.500 1.500 1.500-1.500M8 7l-1.500 1.500 1.500 1.500M14 7l1.500 1.500-1.500 1.500" fill="none" stroke="#5a6fbe" strokeWidth="1" /></Ico></StatusCell>
        <StatusCell $w={19} $p={1}><Ico w={16} h={16}><rect x=".5" y=".5" width="15" height="15" fill="#6f94d8" stroke="#3a5aa0" /><rect x="3" y="1" width="10" height="7" fill="#fff" /><rect x="4" y="11" width="8" height="4" fill="#cdd" /></Ico></StatusCell>
        <StatusCell $grow $p={2} $s={0.01}>simulator::tb.f1.memory[read_pointer]</StatusCell>
        <StatusCell $last $w={106} $p={3} $s={0.2}>1  object selected</StatusCell>
      </StatusBar>

      <TaskBar>
        <TaskList>
          <TaskGrip />
          <Task $g={8}><Ico w={14} h={14}><rect x="1" y="1" width="12" height="12" fill="#000" stroke="#eee" strokeWidth="2" /><rect x="3" y="3" width="7" height="7" fill="#fff" /></Ico><span>jyotiba_maragannache...</span></Task>
          <Task $g={8}><Ico w={14} h={16}><path d="M1 1h4v3h-4z" fill="#aaa" /><path d="M3 4v8" stroke="#888" /><Lens x={6.5} y={6} r={3.8} /></Ico><span>Design Browser 1 - Si...</span></Task>
          <Task $g={8}><Ico w={14} h={12}><rect x=".5" y=".5" width="13" height="11" fill="#444" stroke="#999" /><path d="M3 4l2 2-2 2M6 8h3" stroke="#3c3" fill="none" /></Ico><span>Console - SimVision</span></Task>
          <Task $g={7}><Ico w={14} h={12}><rect width="14" height="12" fill="#123" /><path d="M0 3h3v-2h3v2h4v-2h3M0 11h3v-2h3v2h4v-2h3" stroke="#2a2" fill="none" /><path d="M0 7h6v-1h8" stroke="#264" fill="none" /></Ico><span>Waveform 1 - SimVision</span></Task>
          <Task $on $g={7}><Gates w={14} h={13} c="#999" /><span>Schematic Tracer 1 - Si...</span></Task>
        </TaskList>
        <Pager />
        <Ico w={20} h={24} l={14}><path d="M1 7q9-8 18 0l-2 15q-7 3-14 0z" fill="#fff" stroke="#000" /><ellipse cx="10" cy="5" rx="5" ry="2.500" fill="#333" stroke="#fff" strokeWidth="1.5" /><path d="M8 5l2-3 3 2" stroke="#fff" fill="none" /></Ico>
      </TaskBar>
    </Screen>
  );
}
